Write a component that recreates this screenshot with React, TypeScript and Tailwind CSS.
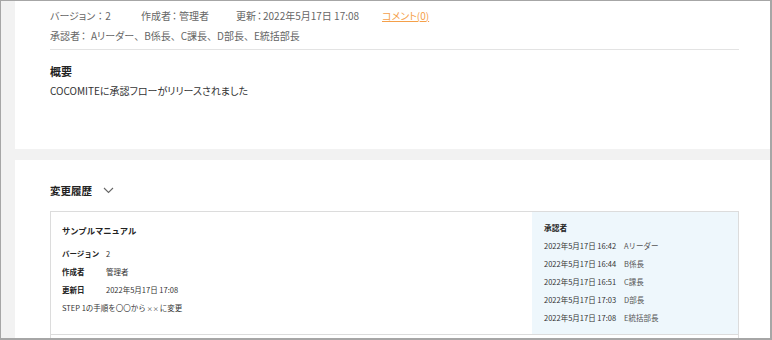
import React from "react";

const font = { fontFamily: '"Noto Sans CJK JP", "Noto Sans", sans-serif' };

function Comma() {
  return <span className="[font-feature-settings:normal]">、</span>;
}

export default function App() {
  const approvals = [
    ["2022年5月17日 16:42", "Aリーダー"],
    ["2022年5月17日 16:44", "B係長"],
    ["2022年5月17日 16:51", "C課長"],
    ["2022年5月17日 17:03", "D部長"],
    ["2022年5月17日 17:08", "E統括部長"],
  ];
  return (
    <div
      style={font}
      className="w-[772px] h-[340px] overflow-hidden border-t border-l border-r-2 border-b-2 border-[#a6a6a6] bg-[#f2f2f2] pl-[14px] [font-feature-settings:'palt'] text-[#333]"
    >
      {/* panel 1 */}
      <div className="bg-white h-[148px] pl-[35px] pr-[31px] pt-[4px]">
        <div className="flex items-center h-[20px] text-[10px] text-[#666] whitespace-nowrap">
          <span className="w-[91px]">
            バージョン
            <span className="[font-feature-settings:normal]">：</span>2
          </span>
          <span className="w-[95px]">
            作成者<span className="ml-[1px] mr-[2px]">：</span>管理者
          </span>
          <span className="w-[146px]">
            更新<span className="ml-[1px] mr-[1px]">：</span>2022年5月17日 17:08
          </span>
          <span className="text-[#f5a04a] underline">コメント(0)</span>
        </div>
        <div className="flex items-center h-[21px] text-[10px] text-[#666] whitespace-nowrap">
          承認者<span className="ml-[1px] mr-[5px]">：</span>Aリーダー<Comma />B係長<Comma />C課長<Comma />D部長<Comma />E統括部長
        </div>
        <div className="mt-[3px] border-t border-[#e3e3e3]" />
        <div className="mt-[13px] h-[17px] flex items-center text-[11px] font-bold text-[#222]">概要</div>
        <div className="mt-[2px] h-[17px] flex items-center text-[10px] text-[#333]">
          COCOMITEに承認フローがリリースされました
        </div>
      </div>
      {/* panel 2 */}
      <div className="bg-white mt-[11px] h-[200px] pl-[35px] pr-[31px] pt-[22px]">
        <div className="flex items-center h-[18px] gap-[11px]">
          <span className="text-[10.5px] font-bold text-[#222] [font-feature-settings:normal]">変更履歴</span>
          <svg width="11" height="7" viewBox="0 0 11 7" className="mt-[-2px]">
            <path d="M1 1 L5.5 5.5 L10 1" fill="none" stroke="#666" strokeWidth="1.1" />
          </svg>
        </div>
        <div className="mt-[11px] border border-[#dcdcdc] flex h-[124px] [font-feature-settings:normal]">
          <div className="flex-1 pl-[11px] pt-[10px] whitespace-nowrap">
            <div className="h-[16px] flex items-center text-[8.3px] font-bold text-[#222]">サンプルマニュアル</div>
            <div className="mt-[7px] flex flex-col text-[7.5px]">
              <div className="flex items-center h-[18px]">
                <span className="w-[44px] font-bold text-[#222]">バージョン</span>
                <span>2</span>
              </div>
              <div className="flex items-center h-[18px]">
                <span className="w-[44px] font-bold text-[#222]">作成者</span>
                <span>管理者</span>
              </div>
              <div className="flex items-center h-[18px]">
                <span className="w-[44px] font-bold text-[#222]">更新日</span>
                <span>2022年5月17日 17:08</span>
              </div>
              <div className="flex items-center h-[18px]">
                STEP 1の手順を〇〇から<span className="text-[6px] mx-[1px]">××</span>に変更
              </div>
            </div>
          </div>
          <div className="w-[206px] bg-[#eef7fc] pl-[12px] pt-[8px] whitespace-nowrap">
            <div className="h-[16px] flex items-center text-[7.7px] font-bold text-[#222]">承認者</div>
            <div className="mt-[1px] flex flex-col text-[7.5px]">
              {approvals.map(([d, n]) => (
                <div key={n} className="flex items-center h-[18px]">
                  <span className="w-[80px]">{d}</span>
                  <span className="text-[#555]">{n}</span>
                </div>
              ))}
            </div>
          </div>
        </div>
        <div className="border-l border-r border-[#dcdcdc] h-[20px]" />
      </div>
    </div>
  );
}
